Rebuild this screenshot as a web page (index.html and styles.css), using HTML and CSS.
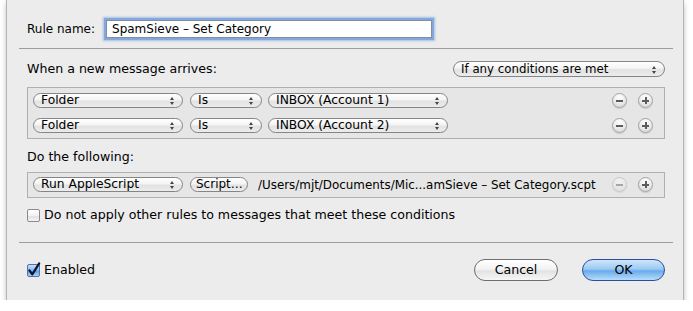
FILE: index.html
```html
<!DOCTYPE html>
<html>
<head>
<meta charset="utf-8">
<link rel="stylesheet" href="styles.css">
</head>
<body>
<div class="window">
  <div class="name-row">
    <span class="label">Rule name:</span>
    <div class="field">SpamSieve – Set Category</div>
  </div>
  <div class="sep sep-top"></div>
  <div class="when-row">
    <span class="label">When a new message arrives:</span>
    <div class="popup p-any">If any conditions are met<span class="arrows"></span></div>
  </div>
  <div class="box cond-box">
    <div class="row">
      <div class="popup p-folder">Folder<span class="arrows"></span></div>
      <div class="popup p-is">Is<span class="arrows"></span></div>
      <div class="popup p-inbox">INBOX (Account 1)<span class="arrows"></span></div>
      <div class="spacer"></div>
      <span class="circ minus"></span>
      <span class="circ plus"></span>
    </div>
    <div class="row">
      <div class="popup p-folder">Folder<span class="arrows"></span></div>
      <div class="popup p-is">Is<span class="arrows"></span></div>
      <div class="popup p-inbox">INBOX (Account 2)<span class="arrows"></span></div>
      <div class="spacer"></div>
      <span class="circ minus"></span>
      <span class="circ plus"></span>
    </div>
  </div>
  <div class="label do-label">Do the following:</div>
  <div class="box act-box">
    <div class="row">
      <div class="popup p-folder">Run AppleScript<span class="arrows"></span></div>
      <div class="pill-btn">Script…</div>
      <span class="path">/Users/mjt/Documents/Mic...amSieve – Set Category.scpt</span>
      <div class="spacer"></div>
      <span class="circ minus disabled"></span>
      <span class="circ plus"></span>
    </div>
  </div>
  <div class="check-row stop-row">
    <span class="checkbox"></span>
    <span class="label">Do not apply other rules to messages that meet these conditions</span>
  </div>
  <div class="sep sep-bottom"></div>
  <div class="bottom-row">
    <div class="check-row">
      <span class="checkbox checked"><svg width="13" height="13" viewBox="0 0 13 13"><path d="M2.4 6.4 L5.3 10.4 L12.2 -0.6" fill="none" stroke="#0b1430" stroke-width="2.2" stroke-linecap="round" stroke-linejoin="round"/></svg></span>
      <span class="label">Enabled</span>
    </div>
    <div class="spacer"></div>
    <div class="button cancel">Cancel</div>
    <div class="button ok">OK</div>
  </div>
</div>
</body>
</html>
```
FILE: styles.css
```css
html, body {
  margin: 0;
  padding: 0;
  background: #ffffff;
}
body {
  font-family: "DejaVu Sans", "Liberation Sans", sans-serif;
  font-size: 12.6px;
  color: #000;
}
.window {
  margin-left: 7px;
  width: 676px;
  height: 300px;
  box-sizing: border-box;
  padding: 0 18px 0 20px;
  background: #ececec;
  box-shadow: 0 0 0 1px #b4b4b4, 0 3px 6px rgba(0, 0, 0, 0.35);
  display: flex;
  flex-direction: column;
}
.label {
  line-height: 16px;
  white-space: nowrap;
}
.name-row {
  margin-top: 17px;
  height: 24px;
  display: flex;
  align-items: center;
}
.name-row .label { font-size: 12px; }
.field {
  margin-left: 11px;
  width: 326px;
  height: 18px;
  box-sizing: border-box;
  border: 1px solid #7e8ea8;
  background: #fff;
  padding-left: 5px;
  line-height: 16px;
  font-size: 12px;
  box-shadow: 0 0 0 2px #84a8dc, 0 0 2px 3px rgba(120, 160, 220, 0.6);
}
.sep {
  height: 1px;
  background: #9e9e9e;
  margin-left: -8px;
  margin-right: -8px;
}
.sep-top { margin-top: 7px; }
.when-row {
  margin-top: 12px;
  height: 16px;
  display: flex;
  align-items: center;
  justify-content: space-between;
}
.cond-box .row + .row { margin-top: 10px; }
.box {
  margin-top: 10px;
  border: 1px solid #b0b0b0;
  background: #e6e6e6;
  padding: 5px 11px 5px 5px;
}
.act-box {
  margin-top: 7px;
  padding-top: 4px;
  padding-bottom: 5px;
}
.row {
  display: flex;
  align-items: center;
  height: 15px;
}
.spacer { flex: 1; }
.popup, .pill-btn {
  position: relative;
  height: 15px;
  box-sizing: border-box;
  border: 1px solid #858585;
  border-radius: 8px;
  background: linear-gradient(#ffffff, #f4f4f4 45%, #e2e2e2 55%, #ececec);
  padding-left: 7px;
  line-height: 13px;
  font-size: 12.3px;
  white-space: nowrap;
  overflow: hidden;
}
.arrows {
  position: absolute;
  right: 7px;
  top: 3px;
  width: 5px;
  height: 8px;
}
.arrows::before, .arrows::after {
  content: "";
  position: absolute;
  left: 0;
  border-left: 2.5px solid transparent;
  border-right: 2.5px solid transparent;
}
.arrows::before {
  top: 0;
  border-bottom: 3px solid #444;
}
.arrows::after {
  bottom: 0;
  border-top: 3px solid #444;
}
.p-any { width: 212px; height: 16px; line-height: 14px; font-size: 11.8px; }
.p-any .arrows { top: 3.5px; }
.p-folder { width: 150px; }
.p-is { width: 72px; margin-left: 7px; }
.p-inbox { width: 180px; margin-left: 6px; }
.pill-btn {
  width: 58px;
  margin-left: 7px;
  padding-left: 5px;
  font-size: 12px;
}
.path {
  margin-left: 10px;
  font-size: 11.9px;
  white-space: nowrap;
}
.circ {
  position: relative;
  width: 15px;
  height: 15px;
  box-sizing: border-box;
  border-radius: 50%;
  border: 1px solid #a4a4a4;
  background: radial-gradient(circle at 50% 25%, #ffffff, #ececec 50%, #cfcfcf 100%);
  box-shadow: 0 1px 1px rgba(0, 0, 0, 0.12);
}
.circ + .circ { margin-left: 11px; }
.circ::before, .circ::after {
  content: "";
  position: absolute;
  background: #5c5c5c;
}
.circ::before {
  left: 3px;
  top: 5.5px;
  width: 7px;
  height: 2px;
}
.plus::after {
  left: 5.5px;
  top: 3px;
  width: 2px;
  height: 7px;
}
.circ.disabled { opacity: 0.45; }
.do-label {
  margin-top: 10px;
}
.check-row {
  display: flex;
  align-items: center;
  height: 16px;
}
.stop-row { margin-top: 9px; }
.checkbox {
  width: 13px;
  height: 13px;
  box-sizing: border-box;
  border: 1px solid #8a8a8a;
  border-radius: 2px;
  background: linear-gradient(#ffffff, #f2f2f2 50%, #e0e0e0 55%, #f4f4f4);
  margin-right: 4px;
  position: relative;
}
.checkbox.checked {
  border-color: #5872a6;
  background: linear-gradient(#c6e0fb, #8cbff0 45%, #5c9ee6 55%, #a9d4fb);
}
.checkbox svg {
  position: absolute;
  left: -1px;
  top: -1px;
  overflow: visible;
}
.sep-bottom { margin-top: 19px; }
.bottom-row {
  margin-top: 16px;
  height: 22px;
  display: flex;
  align-items: center;
}
.button {
  height: 22px;
  box-sizing: border-box;
  border-radius: 11px;
  text-align: center;
  line-height: 20px;
  font-size: 12.6px;
}
.cancel {
  width: 84px;
  border: 1px solid #6e6e6e;
  background: linear-gradient(#ffffff, #f3f3f3 45%, #e2e2e2 55%, #f6f6f6);
}
.ok {
  width: 83px;
  margin-left: 24px;
  border: 1px solid #2c4d9e;
  background: linear-gradient(#cfe6fb, #9ccaf4 45%, #6aaaec 55%, #b6def9);
}
```
